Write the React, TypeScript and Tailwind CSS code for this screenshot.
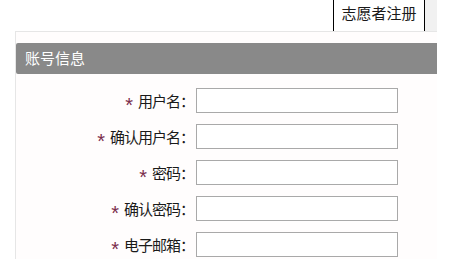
const fields = ["用户名", "确认用户名", "密码", "确认密码", "电子邮箱"];

const App = () => {
  return (
    <div
      className="w-[464px] h-[259px] overflow-hidden bg-white text-[#1a1a1a]"
      style={{ fontFamily: '"Noto Sans CJK SC", "Noto Sans", sans-serif' }}
    >
      <div className="flex h-[31px]">
        <div className="w-[333px]" />
        <div className="w-[92px] border-x border-black flex items-start justify-center pt-[3px] text-[15px] leading-[20px]">
          志愿者注册
        </div>
        <div className="w-[12px] bg-[#f1f1f1]" />
      </div>
      <div className="ml-[15px] w-[422px] border-t border-l border-[#e6e6e6] bg-[#fffdfd] pt-[11px] h-[228px]">
        <div className="h-[31px] bg-[#898989] rounded-l-[2px] flex items-center pl-[9px] text-white text-[15px]">
          账号信息
        </div>
        <div className="flex flex-col gap-[11px] pt-[14px]">
          {fields.map((f) => (
            <div key={f} className="flex items-center h-[25px]">
              <div className="w-[180px] flex justify-end items-center text-[15px] leading-none pr-[2px]">
                <span
                  className="text-[#7b2e4c] mr-[5px] text-[20px] translate-y-[4px]"
                  style={{ fontFamily: '"Liberation Sans", sans-serif' }}
                >
                  *
                </span>
                <span className="tracking-[-1px]">{f}：</span>
              </div>
              <div className="w-[202px] h-[25px] border border-[#a9a9a9] bg-white" />
            </div>
          ))}
        </div>
      </div>
    </div>
  );
};

export default App;
